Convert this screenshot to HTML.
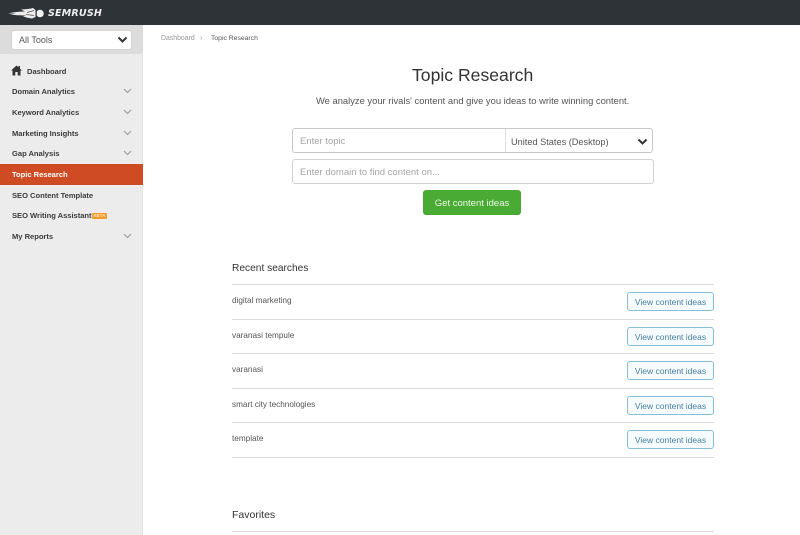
<!DOCTYPE html>
<html><head><meta charset="utf-8"><style>
html,body{margin:0;padding:0;width:800px;height:535px;overflow:hidden;background:#fff;font-family:"Liberation Sans",sans-serif;color:#333}
div,span{position:absolute;white-space:nowrap;box-sizing:border-box}
.nav{left:12px;font-size:7.600px;font-weight:bold;color:#3b3b3b;line-height:12px;letter-spacing:-.03px}
.row{left:232px;font-size:8.200px;color:#555;line-height:12px}
.ln{left:232px;width:482px;height:1px;background:#dcdcdc}
.btn{left:627px;width:87px;height:19px;border:1px solid #86bedb;border-radius:3px;background:#f6fbfe;color:#4a7f9e;font-size:8.500px;line-height:18px;text-align:center}
</style></head><body>
<div style="left:0;top:0;width:800px;height:25px;background:#2e3338"></div>
<svg style="position:absolute;left:8px;top:7px" width="38" height="13" viewBox="0 0 38 13">
<path d="M0 6.500 C6 5 11 4.500 17 4.500 L13 2.500 C18 2 22 2 25 1 L27.500 3 L27.500 10 L24 11.500 C21 11 18 10.500 15 9.500 L18 8.500 C12 8.500 6 8 2 7.500 L8 6.800 C5 6.500 3 6.500 0 6.500Z" fill="#ececec"/>
<path d="M19 5.500 L26 3.500 M18 7.500 L26 8.500" stroke="#555" stroke-width=".8"/>
<circle cx="32" cy="6.500" r="3.800" fill="#f2f2f2"/><path d="M29 4 A3.500 3.500 0 0 0 29 9 Z" fill="#666"/></svg>
<div style="left:48px;top:8px;font-size:9.500px;line-height:12px;font-family:'DejaVu Sans',sans-serif;font-weight:bold;font-style:italic;color:#eee;letter-spacing:.2px">SEMRUSH</div>

<div style="left:0;top:25px;width:143px;height:510px;background:#ececec;border-right:1px solid #e2e2e2"></div>
<div style="left:0;top:25px;width:143px;height:29px;background:#dcdcdc"></div>
<div style="left:12px;top:31px;width:119px;height:18px;background:#fff;border-radius:2px;box-shadow:0 0 1px #aaa"></div>
<div style="left:19px;top:34px;font-size:9px;line-height:12px;color:#555">All Tools</div>
<svg style="position:absolute;left:117px;top:36px" width="11" height="8"><path d="M1.500 1.500 L5.500 5.500 L9.500 1.500" fill="none" stroke="#333" stroke-width="2"/></svg>

<svg style="position:absolute;left:11px;top:65px" width="11" height="11" viewBox="0 0 11 11"><path d="M5.500 .5 L7.500 2.300 L7.500 1 L9 1 L9 3.700 L11 5.500 L9.500 5.500 L9.500 10.500 L6.700 10.500 L6.700 7 L4.300 7 L4.300 10.500 L1.500 10.500 L1.500 5.500 L0 5.500Z" fill="#333"/></svg>
<div class="nav" style="left:27px;top:66px">Dashboard</div>
<div class="nav" style="top:86px">Domain Analytics</div>
<div class="nav" style="top:107px">Keyword Analytics</div>
<div class="nav" style="top:128px">Marketing Insights</div>
<div class="nav" style="top:148px">Gap Analysis</div>
<div style="left:0;top:164px;width:143px;height:20.500px;background:#cf4b23"></div>
<div class="nav" style="top:169px;color:#fff">Topic Research</div>
<div class="nav" style="top:190px">SEO Content Template</div>
<div class="nav" style="top:210px">SEO Writing Assistant</div>
<div style="left:92px;top:213px;width:15px;height:6px;background:#f39a2c;border-radius:1px;color:#ffe3b8;font-size:4.500px;line-height:6px;text-align:center;font-weight:bold">BETA</div>
<div class="nav" style="top:231px">My Reports</div>
<svg style="position:absolute;left:123px;top:88px" width="9" height="6"><path d="M1 1 L4.500 4.500 L8 1" fill="none" stroke="#a0a0a0" stroke-width="1.200"/></svg>
<svg style="position:absolute;left:123px;top:109px" width="9" height="6"><path d="M1 1 L4.500 4.500 L8 1" fill="none" stroke="#a0a0a0" stroke-width="1.200"/></svg>
<svg style="position:absolute;left:123px;top:130px" width="9" height="6"><path d="M1 1 L4.500 4.500 L8 1" fill="none" stroke="#a0a0a0" stroke-width="1.200"/></svg>
<svg style="position:absolute;left:123px;top:150px" width="9" height="6"><path d="M1 1 L4.500 4.500 L8 1" fill="none" stroke="#a0a0a0" stroke-width="1.200"/></svg>
<svg style="position:absolute;left:123px;top:233px" width="9" height="6"><path d="M1 1 L4.500 4.500 L8 1" fill="none" stroke="#a0a0a0" stroke-width="1.200"/></svg>

<div style="left:161px;top:33px;font-size:6.900px;line-height:11px;color:#999">Dashboard</div>
<div style="left:200px;top:32px;font-size:7.300px;line-height:11px;color:#999">&rsaquo;</div>
<div style="left:211px;top:33px;font-size:6.800px;line-height:11px;color:#555">Topic Research</div>

<div style="left:412px;top:63px;font-size:17.600px;line-height:24px;color:#333">Topic Research</div>
<div style="left:316px;top:94px;font-size:9.400px;line-height:13px;color:#555">We analyze your rivals' content and give you ideas to write winning content.</div>

<div style="left:292px;top:128px;width:361px;height:25px;border:1px solid #c8c8c8;border-radius:3px;background:#fff"></div>
<div style="left:505px;top:129px;width:1px;height:23px;background:#ddd"></div>
<div style="left:300px;top:136px;font-size:9.500px;line-height:12px;color:#a5a5a5">Enter topic</div>
<div style="left:511px;top:136px;font-size:9.200px;line-height:12px;color:#555">United States (Desktop)</div>
<svg style="position:absolute;left:637px;top:138px" width="11" height="8"><path d="M1.500 1.500 L5.500 5.500 L9.500 1.500" fill="none" stroke="#333" stroke-width="2"/></svg>
<div style="left:292px;top:159px;width:362px;height:25px;border:1px solid #d2d2d2;border-radius:3px;background:#fff"></div>
<div style="left:300px;top:167px;font-size:9.500px;line-height:12px;color:#a5a5a5">Enter domain to find content on...</div>
<div style="left:423px;top:190px;width:98px;height:25px;background:#4aab34;border-radius:3px;color:#eef7ea;font-size:9.500px;line-height:27px;text-align:center">Get content ideas</div>

<div style="left:232px;top:262px;font-size:10.200px;line-height:14px;color:#333">Recent searches</div>
<div class="ln" style="top:284px"></div>
<div class="row" style="top:295px">digital marketing</div>
<div class="btn" style="top:292px">View content ideas</div>
<div class="ln" style="top:319px"></div>
<div class="row" style="top:330px">varanasi tempule</div>
<div class="btn" style="top:327px">View content ideas</div>
<div class="ln" style="top:353px"></div>
<div class="row" style="top:364px">varanasi</div>
<div class="btn" style="top:361px">View content ideas</div>
<div class="ln" style="top:388px"></div>
<div class="row" style="top:399px">smart city technologies</div>
<div class="btn" style="top:396px">View content ideas</div>
<div class="ln" style="top:422px"></div>
<div class="row" style="top:433px">template</div>
<div class="btn" style="top:430px">View content ideas</div>
<div class="ln" style="top:457px"></div>
<div style="left:232px;top:508px;font-size:10.500px;line-height:14px;color:#333">Favorites</div>
<div class="ln" style="top:531px"></div>
</body></html>
